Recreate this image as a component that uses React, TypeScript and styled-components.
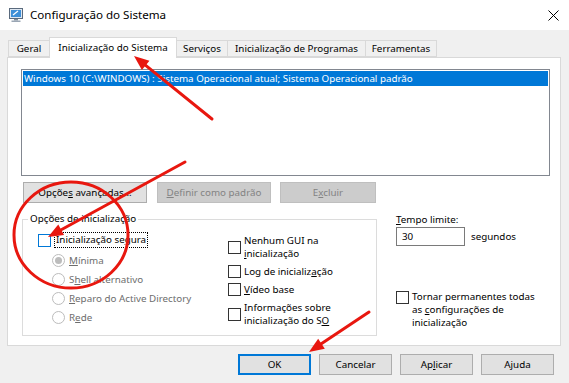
import React from "react";
import styled, { createGlobalStyle } from "styled-components";

const Global = createGlobalStyle`
  html, body { margin: 0; padding: 0; background: #f0f0f0; }
  body { font-family: "Noto Sans", "Open Sans", sans-serif; font-size: 9.8px; color: #000; }
  * { box-sizing: border-box; }
`;

const Window = styled.div`
  position: relative;
  width: 569px;
  height: 383px;
  overflow: hidden;
  background: #f0f0f0;
  display: flex;
  flex-direction: column;
`;

const TitleBar = styled.div`
  height: 30px;
  flex-shrink: 0;
  background: #fff;
  display: flex;
  align-items: center;
`;

const TitleIcon = styled.svg`
  margin-left: 8px;
  width: 16px;
  height: 16px;
`;

const TitleText = styled.div`
  margin-left: 6px;
  font-size: 11.6px;
  line-height: 16px;
`;

const CloseBtn = styled.div`
  margin-left: auto;
  width: 32px;
  height: 30px;
  display: flex;
  align-items: center;
  justify-content: center;
`;

const Body = styled.div`
  padding: 0 8px 0 7px;
  display: flex;
  flex-direction: column;
`;

const TabStrip = styled.div`
  margin-top: 7px;
  height: 20px;
  display: flex;
  align-items: flex-end;
  padding-left: 2px;
  position: relative;
  z-index: 2;
`;

const Tab = styled.div<{ $w: number; $active?: boolean }>`
  width: ${(p) => p.$w}px;
  height: ${(p) => (p.$active ? 21 : 17)}px;
  margin-bottom: ${(p) => (p.$active ? -1 : 0)}px;
  margin-left: -1px;
  border: 1px solid #d9d9d9;
  border-bottom: ${(p) => (p.$active ? "none" : "1px solid #d9d9d9")};
  background: ${(p) => (p.$active ? "#fff" : "#f0f0f0")};
  display: flex;
  align-items: center;
  justify-content: center;
  padding-bottom: ${(p) => (p.$active ? 2 : 0)}px;
  white-space: nowrap;
  position: relative;
  z-index: ${(p) => (p.$active ? 2 : 1)};
`;

const Panel = styled.div`
  height: 289px;
  background: #fff;
  border: 1px solid #d9d9d9;
  padding: 11px 9px 0 13px;
  display: flex;
  flex-direction: column;
`;

const ListBox = styled.div`
  width: 529px;
  height: 107px;
  border: 1px solid #828790;
  padding: 1px;
`;

const ListRow = styled.div`
  height: 15px;
  line-height: 15px;
  padding-left: 1px;
  background: #0078d7;
  color: #fff;
  white-space: nowrap;
`;

const ButtonRow = styled.div`
  margin-top: 6px;
  margin-left: 2px;
  display: flex;
`;

const Btn = styled.div<{ $w: number; $gap?: number; $disabled?: boolean; $focus?: boolean }>`
  width: ${(p) => p.$w}px;
  height: 21px;
  margin-left: ${(p) => p.$gap ?? 0}px;
  background: ${(p) => (p.$disabled ? "#cccccc" : "#e1e1e1")};
  border: ${(p) => (p.$focus ? "2px solid #0078d7" : p.$disabled ? "1px solid #bfbfbf" : "1px solid #adadad")};
  color: ${(p) => (p.$disabled ? "#838383" : "#000")};
  display: flex;
  align-items: center;
  justify-content: center;
  white-space: nowrap;
`;

const Lower = styled.div`
  margin-top: 9px;
  display: flex;
  align-items: flex-start;
`;

const Group = styled.fieldset`
  margin: 0 0 0 1px;
  width: 355px;
  height: 124px;
  border: 1px solid #dcdcdc;
  padding: 0;
  display: grid;
  grid-template-columns: 205px 1fr;
`;

const Legend = styled.legend`
  margin-left: 5px;
  padding: 0 2px;
  line-height: 14px;
`;

const LeftCol = styled.div`
  padding: 6px 0 0 15px;
  display: flex;
  flex-direction: column;
`;

const RightCol = styled.div`
  padding-top: 8px;
  display: flex;
  flex-direction: column;
  gap: 5px;
`;

const CheckRow = styled.div<{ $top?: boolean }>`
  display: flex;
  align-items: ${(p) => (p.$top ? "flex-start" : "center")};
  gap: 3px;
`;

const Box = styled.span<{ $focus?: boolean; $mt?: number }>`
  flex-shrink: 0;
  width: 13px;
  height: 13px;
  margin-top: ${(p) => p.$mt ?? 0}px;
  border: 1px solid ${(p) => (p.$focus ? "#0078d7" : "#333333")};
  background: #fff;
`;

const FocusLabel = styled.span`
  border: 1px dotted #000;
  padding: 0 1px;
  line-height: 14px;
`;

const Label = styled.span`
  line-height: 13px;
`;

const RadioRow = styled.div`
  height: 19px;
  margin-left: 14px;
  display: flex;
  align-items: center;
  gap: 4px;
  color: #6d6d6d;
`;

const SafeRow = styled(CheckRow)`
  height: 16px;
  margin-bottom: 3px;
`;

const Radio = styled.span<{ $checked?: boolean }>`
  width: 13px;
  height: 13px;
  border-radius: 50%;
  border: 1px solid #bcbcbc;
  background: #fff;
  display: flex;
  align-items: center;
  justify-content: center;
  &::after {
    content: "";
    display: ${(p) => (p.$checked ? "block" : "none")};
    width: 7px;
    height: 7px;
    border-radius: 50%;
    background: #bcbcbc;
  }
`;

const Side = styled.div`
  margin-left: 19px;
  padding-top: 1px;
  display: flex;
  flex-direction: column;
`;

const TimeRow = styled.div`
  margin-top: 1px;
  display: flex;
  align-items: center;
  gap: 6px;
`;

const Input = styled.div`
  width: 69px;
  height: 19px;
  border: 1px solid #7a7a7a;
  padding-left: 5px;
  line-height: 17px;
`;

const PermRow = styled(CheckRow)`
  margin-top: 44px;
  width: 146px;
`;

const Footer = styled.div`
  margin-top: 8px;
  padding-right: 7px;
  display: flex;
  justify-content: flex-end;
  gap: 8px;
`;

const Overlay = styled.svg`
  position: absolute;
  inset: 0;
  pointer-events: none;
  z-index: 10;
`;

function Arrow({ x1, y1, x2, y2 }: { x1: number; y1: number; x2: number; y2: number }) {
  const dx = x2 - x1;
  const dy = y2 - y1;
  const len = Math.hypot(dx, dy);
  const ux = dx / len;
  const uy = dy / len;
  const hl = 15;
  const hw = 6;
  const bx = x2 - ux * hl;
  const by = y2 - uy * hl;
  const p1 = `${bx - uy * hw},${by + ux * hw}`;
  const p2 = `${bx + uy * hw},${by - ux * hw}`;
  return (
    <g>
      <line x1={x1} y1={y1} x2={bx + ux * 2} y2={by + uy * 2} stroke="#e8170f" strokeWidth={3} strokeLinecap="round" />
      <polygon points={`${x2},${y2} ${p1} ${p2}`} fill="#e8170f" />
    </g>
  );
}

export default function App() {
  return (
    <>
      <Global />
      <Window>
        <TitleBar>
          <TitleIcon viewBox="0 0 16 16">
            <rect x="1.5" y="1.5" width="13" height="10" fill="#dfe8f2" stroke="#5a6a7d" />
            <rect x="3" y="3" width="10" height="7" fill="#3d8fd8" />
            <path d="M5 8 L10 4" stroke="#ffffff" strokeWidth="1.2" />
            <rect x="6" y="12" width="4" height="1.5" fill="#7d8a99" />
            <rect x="3.5" y="13.5" width="9" height="1.5" fill="#9aa6b4" />
          </TitleIcon>
          <TitleText>Configuração do Sistema</TitleText>
          <CloseBtn>
            <svg width="11" height="11" viewBox="0 0 11 11">
              <path d="M0.5 0.5 L10.5 10.5 M10.5 0.5 L0.5 10.5" stroke="#000" strokeWidth="1" />
            </svg>
          </CloseBtn>
        </TitleBar>
        <Body>
          <TabStrip>
            <Tab $w={42}>Geral</Tab>
            <Tab $w={128} $active>Inicialização do Sistema</Tab>
            <Tab $w={52}>Serviços</Tab>
            <Tab $w={139}>Inicialização de Programas</Tab>
            <Tab $w={72}>Ferramentas</Tab>
          </TabStrip>
          <Panel>
            <ListBox>
              <ListRow>Windows 10 (C:\WINDOWS) : Sistema Operacional atual; Sistema Operacional padrão</ListRow>
            </ListBox>
            <ButtonRow>
              <Btn $w={124}><span>Opçõe<u>s</u> avançadas...</span></Btn>
              <Btn $w={114} $gap={10} $disabled><span><u>D</u>efinir como padrão</span></Btn>
              <Btn $w={96} $gap={9} $disabled><span>E<u>x</u>cluir</span></Btn>
            </ButtonRow>
            <Lower>
              <Group>
                <Legend>Opções de inicialização</Legend>
                <LeftCol>
                  <SafeRow>
                    <Box $focus />
                    <FocusLabel>Inicialização se<u>g</u>ura</FocusLabel>
                  </SafeRow>
                  <RadioRow><Radio $checked /><span><u>M</u>ínima</span></RadioRow>
                  <RadioRow><Radio /><span>S<u>h</u>ell alternativo</span></RadioRow>
                  <RadioRow><Radio /><span><u>R</u>eparo do Active Directory</span></RadioRow>
                  <RadioRow><Radio /><span>R<u>e</u>de</span></RadioRow>
                </LeftCol>
                <RightCol>
                  <CheckRow>
                    <Box />
                    <Label>Nenhum GUI na<br /><u>i</u>nicialização</Label>
                  </CheckRow>
                  <CheckRow>
                    <Box />
                    <Label>Log de inicializ<u>a</u>ção</Label>
                  </CheckRow>
                  <CheckRow>
                    <Box />
                    <Label><u>V</u>ídeo base</Label>
                  </CheckRow>
                  <CheckRow>
                    <Box />
                    <Label>Informações sobre<br />inicialização do S<u>O</u></Label>
                  </CheckRow>
                </RightCol>
              </Group>
              <Side>
                <Label><u>T</u>empo limite:</Label>
                <TimeRow>
                  <Input>30</Input>
                  <span>segundos</span>
                </TimeRow>
                <PermRow $top>
                  <Box $mt={1} />
                  <Label>Tornar permanentes todas<br />as <u>c</u>onfigurações de<br />inicialização</Label>
                </PermRow>
              </Side>
            </Lower>
          </Panel>
          <Footer>
            <Btn $w={73} $focus>OK</Btn>
            <Btn $w={73}>Cancelar</Btn>
            <Btn $w={73}><span>Ap<u>l</u>icar</span></Btn>
            <Btn $w={73}>Ajuda</Btn>
          </Footer>
        </Body>
        <Overlay width="569" height="383" viewBox="0 0 569 383">
          <Arrow x1={212} y1={119} x2={134} y2={56} />
          <Arrow x1={185} y1={162} x2={48} y2={237} />
          <Arrow x1={369} y1={312} x2={309} y2={352} />
          <ellipse cx={71} cy={235} rx={57} ry={53} fill="none" stroke="#e8170f" strokeWidth={3} />
        </Overlay>
      </Window>
    </>
  );
}
